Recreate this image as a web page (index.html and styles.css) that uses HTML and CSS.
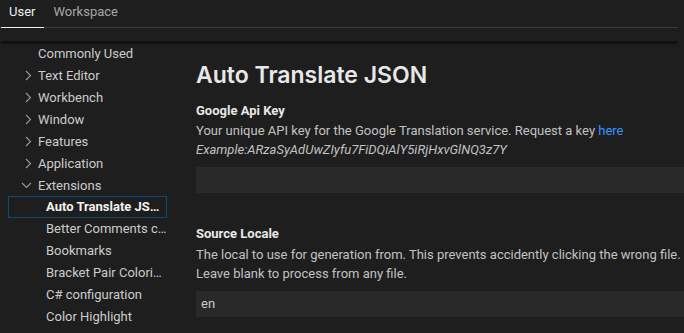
FILE: index.html
```html
<!DOCTYPE html>
<html lang="en">
<head>
<meta charset="UTF-8">
<title>Settings</title>
<link rel="stylesheet" href="styles.css">
</head>
<body>
  <div class="tabs">
    <div class="tab active">User</div>
    <div class="tab">Workspace</div>
  </div>
  <div class="search-space"></div>

  <div class="settings">
    <div class="scroll-shadow"></div>
    <nav class="toc">
      <div class="toc-item">Commonly Used</div>
      <div class="toc-item"><svg class="chevron" width="9" height="11" viewBox="0 0 9 11"><path d="M2 1l4.5 4.5L2 10" fill="none" stroke="#9a9a9a" stroke-width="1.1"/></svg>Text Editor</div>
      <div class="toc-item"><svg class="chevron" width="9" height="11" viewBox="0 0 9 11"><path d="M2 1l4.5 4.5L2 10" fill="none" stroke="#9a9a9a" stroke-width="1.1"/></svg>Workbench</div>
      <div class="toc-item"><svg class="chevron" width="9" height="11" viewBox="0 0 9 11"><path d="M2 1l4.5 4.5L2 10" fill="none" stroke="#9a9a9a" stroke-width="1.1"/></svg>Window</div>
      <div class="toc-item"><svg class="chevron" width="9" height="11" viewBox="0 0 9 11"><path d="M2 1l4.5 4.5L2 10" fill="none" stroke="#9a9a9a" stroke-width="1.1"/></svg>Features</div>
      <div class="toc-item"><svg class="chevron" width="9" height="11" viewBox="0 0 9 11"><path d="M2 1l4.5 4.5L2 10" fill="none" stroke="#9a9a9a" stroke-width="1.1"/></svg>Application</div>
      <div class="toc-item"><svg class="chevron down" width="11" height="9" viewBox="0 0 11 9"><path d="M1 2l4.5 4.5L10 2" fill="none" stroke="#9a9a9a" stroke-width="1.1"/></svg>Extensions</div>
      <div class="toc-item sub selected">Auto Translate JSON</div>
      <div class="toc-item sub">Better Comments configuration</div>
      <div class="toc-item sub">Bookmarks</div>
      <div class="toc-item sub">Bracket Pair Colorizer</div>
      <div class="toc-item sub">C# configuration</div>
      <div class="toc-item sub">Color Highlight</div>
    </nav>

    <main class="editor">
      <h1>Auto Translate JSON</h1>

      <section class="setting">
        <h2>Google Api Key</h2>
        <p class="desc">Your unique API key for the Google Translation service. Request a key <a href="#">here</a><br>
        <em>Example:ARzaSyAdUwZIyfu7FiDQiAlY5iRjHxvGlNQ3z7Y</em></p>
        <div class="input"></div>
      </section>

      <section class="setting">
        <h2>Source Locale</h2>
        <p class="desc">The local to use for generation from. This prevents accidently clicking the wrong file.<br>
        Leave blank to process from any file.</p>
        <div class="input">en</div>
      </section>
    </main>
  </div>
</body>
</html>
```

FILE: styles.css
```css
:root {
  --bg: #1e1e1e;
  --input: #292929;
  --text: #cccccc;
  --title: #e8e8e8;
  --muted: #a6a6a6;
  --link: #3794ff;
  --focus: #0e4a78;
}

* {
  margin: 0;
  padding: 0;
  box-sizing: border-box;
}

body {
  font-family: Roboto, 'Noto Sans', sans-serif;
  font-size: 13px;
  background: var(--bg);
  color: var(--text);
  overflow: hidden;
}

.tabs {
  display: flex;
  height: 28px;
  margin-right: 6px;
  border-bottom: 1px solid #3a3a3a;
}

.tab {
  padding: 4px 9px 0 8px;
  margin-left: 1px;
  color: var(--muted);
}

.tab.active {
  color: #f0f0f0;
  border-bottom: 1px solid #f0f0f0;
  margin-bottom: -1px;
}

.search-space {
  height: 14px;
}

.settings {
  position: relative;
  display: flex;
}

.scroll-shadow {
  position: absolute;
  top: -1px;
  left: 1px;
  right: 6px;
  height: 3px;
  background: #111;
}

.toc {
  width: 170px;
  flex-shrink: 0;
  padding-left: 8px;
}

.toc-item {
  display: flex;
  align-items: center;
  height: 22px;
  padding-left: 30px;
  white-space: nowrap;
  overflow: hidden;
  color: var(--text);
}

.chevron {
  flex-shrink: 0;
  margin-left: -14px;
  margin-right: 5px;
}

.chevron.down {
  margin-left: -17px;
  margin-right: 6px;
}

.toc-item.sub {
  display: block;
  line-height: 22px;
  padding-left: 38px;
  padding-right: 2px;
  text-overflow: ellipsis;
}

.toc-item.selected {
  width: 159px;
  border: 1px solid var(--focus);
  line-height: 20px;
  padding-left: 37px;
  font-weight: 700;
  color: #f2f2f2;
}

.editor {
  flex: 1;
  padding: 19px 0 0 26px;
  min-width: 0;
}

h1 {
  font-family: Inter, Roboto, sans-serif;
  font-size: 23px;
  line-height: 28px;
  font-weight: 600;
  color: var(--title);
}

.setting {
  margin-top: 13px;
}

.setting + .setting {
  margin-top: 32px;
}

h2 {
  font-size: 13px;
  line-height: 18px;
  font-weight: 700;
  color: var(--title);
}

.desc {
  margin-top: 2px;
  line-height: 18.5px;
  color: #c2c2c2;
}

.setting + .setting .desc {
  margin-top: 3px;
}

.desc a {
  color: var(--link);
  text-decoration: none;
}

.input {
  margin-top: 8px;
  height: 26px;
  padding: 0 5px;
  line-height: 26px;
  background: var(--input);
  color: var(--text);
}
```
